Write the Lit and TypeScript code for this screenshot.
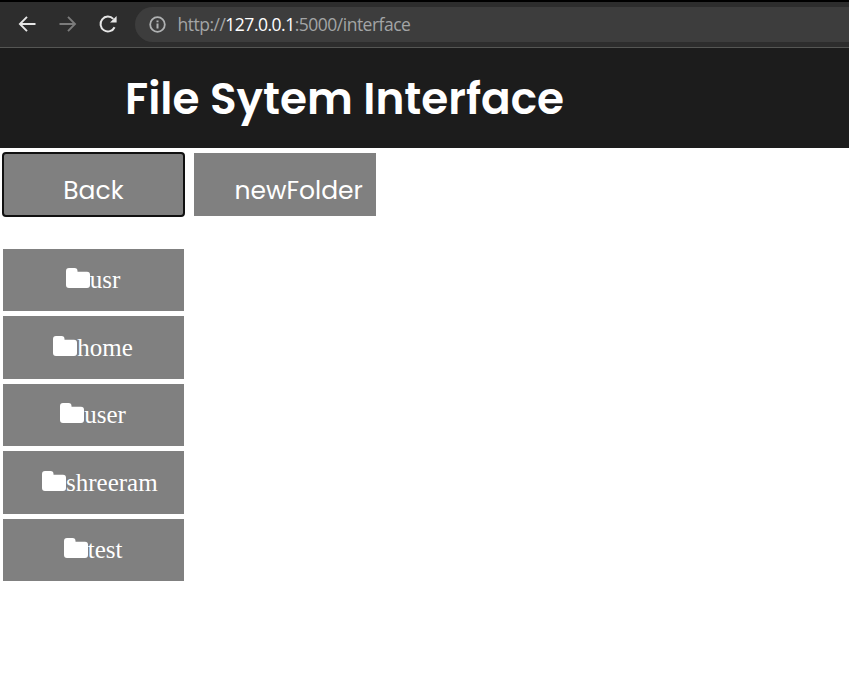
import { LitElement, html, css } from "lit";
import { customElement, property } from "lit/decorators.js";

@customElement("browser-bar")
class BrowserBar extends LitElement {
  static styles = css`
    :host {
      display: flex;
      box-sizing: border-box;
      height: 48px;
      background: #2d2d2d;
      border-top: 2px solid #000;
      border-bottom: 1px solid #555654;
      padding: 5px 0 5px 15px;
      font-family: "Open Sans", "Noto Sans", sans-serif;
    }
    .nav {
      display: flex;
      align-items: center;
      gap: 16px;
      margin: -1px 16px 0 0;
    }
    svg { display: block; flex: none; }
    .address {
      flex: 1;
      display: flex;
      align-items: center;
      gap: 11.5px;
      padding-left: 14px;
      border-radius: 18px 0 0 18px;
      background: #3d3d3d;
      color: #a3a5a6;
      font-size: 17.5px;
      white-space: nowrap;
    }
    .url { display: block; line-height: 24px; letter-spacing: -0.5px; margin-top: -2px; }
    .host { color: #fff; }
  `;
  render() {
    return html`
      <div class="nav">
        <svg width="24" height="24" viewBox="0 0 24 24" fill="none" stroke="#e6e6e6" stroke-width="1.9"><path d="M20.5 12H5.6M12 4.8 4.9 12l7.1 7.2" /></svg>
        <svg width="24" height="24" viewBox="0 0 24 24" fill="none" stroke="#7b7b7b" stroke-width="1.9"><path d="M4.5 12h15.2M13 4.8l7 7.2-7 7.2" /></svg>
        <svg width="24" height="24" viewBox="0 0 24 24" fill="none" stroke="#e6e6e6" stroke-width="2"><path d="M19.6 15.2A7.4 7.4 0 1 1 18.3 6.9" /><path d="M21.6 4v6.6h-6.6z" fill="#e6e6e6" stroke="none" /></svg>
      </div>
      <div class="address">
        <svg width="17" height="17" viewBox="0 0 17 17" fill="none" stroke="#b0b2b3" stroke-width="1.8"><circle cx="8.5" cy="8.5" r="7.3" /><path d="M8.5 7.6v4.8M8.5 4.4v1.8" stroke-width="2" /></svg>
        <span class="url">http://<span class="host">127.0.0.1</span>:5000/interface</span>
      </div>
    `;
  }
}

const tile = css`
  :host {
    display: flex;
    box-sizing: border-box;
    align-items: center;
    justify-content: safe center;
    width: 181.25px;
    height: 62.5px;
    background: #808080;
    color: #fff;
    white-space: nowrap;
  }
`;

@customElement("action-button")
class ActionButton extends LitElement {
  static styles = [
    tile,
    css`
      :host {
        padding: 13.5px 40px 0;
        font-family: Poppins, Inter, sans-serif;
        font-size: 25px;
      }
      :host([focused]) {
        outline: 2px solid #101010;
        outline-offset: -1px;
        border-radius: 3px;
      }
    `,
  ];
  render() {
    return html`<slot></slot>`;
  }
}

@customElement("folder-tile")
class FolderTile extends LitElement {
  @property() name = "";
  static styles = [
    tile,
    css`
      :host {
        padding: 0 39.8px 0 39.3px;
        font: 25px "Times New Roman", "Liberation Serif", serif;
      }
      svg { flex: none; margin-bottom: 4px; }
    `,
  ];
  render() {
    return html`
      <svg width="24" height="20" viewBox="0 0 24 20"><path fill="#fff" d="M3 0H8.5Q11.5 0 11.5 3V3.8H21Q24 3.8 24 6.8V17Q24 20 21 20H3Q0 20 0 17V3Q0 0 3 0Z" /></svg><span>${this.name}</span>
    `;
  }
}

@customElement("app-root")
class AppRoot extends LitElement {
  static styles = css`
    :host {
      display: block;
      height: 685px;
      overflow: hidden;
      background: #fff;
    }
    header {
      display: flex;
      align-items: center;
      box-sizing: border-box;
      height: 100px;
      padding: 1px 0 0 125px;
      background: #1c1c1c;
    }
    h1 {
      margin: 0;
      color: #fff;
      font: 600 43.75px Poppins, Inter, sans-serif;
      white-space: nowrap;
    }
    .actions {
      display: flex;
      gap: 10.4px;
      padding: 5px 0 0 2.75px;
    }
    .folders {
      display: flex;
      flex-direction: column;
      gap: 5px;
      padding: 33.25px 0 0 2.75px;
    }
  `;
  private folders = ["usr", "home", "user", "shreeram", "test"];
  render() {
    return html`
      <browser-bar></browser-bar>
      <header><h1>File Sytem Interface</h1></header>
      <div class="actions">
        <action-button focused>Back</action-button>
        <action-button>newFolder</action-button>
      </div>
      <div class="folders">
        ${this.folders.map((f) => html`<folder-tile .name=${f}></folder-tile>`)}
      </div>
    `;
  }
}
